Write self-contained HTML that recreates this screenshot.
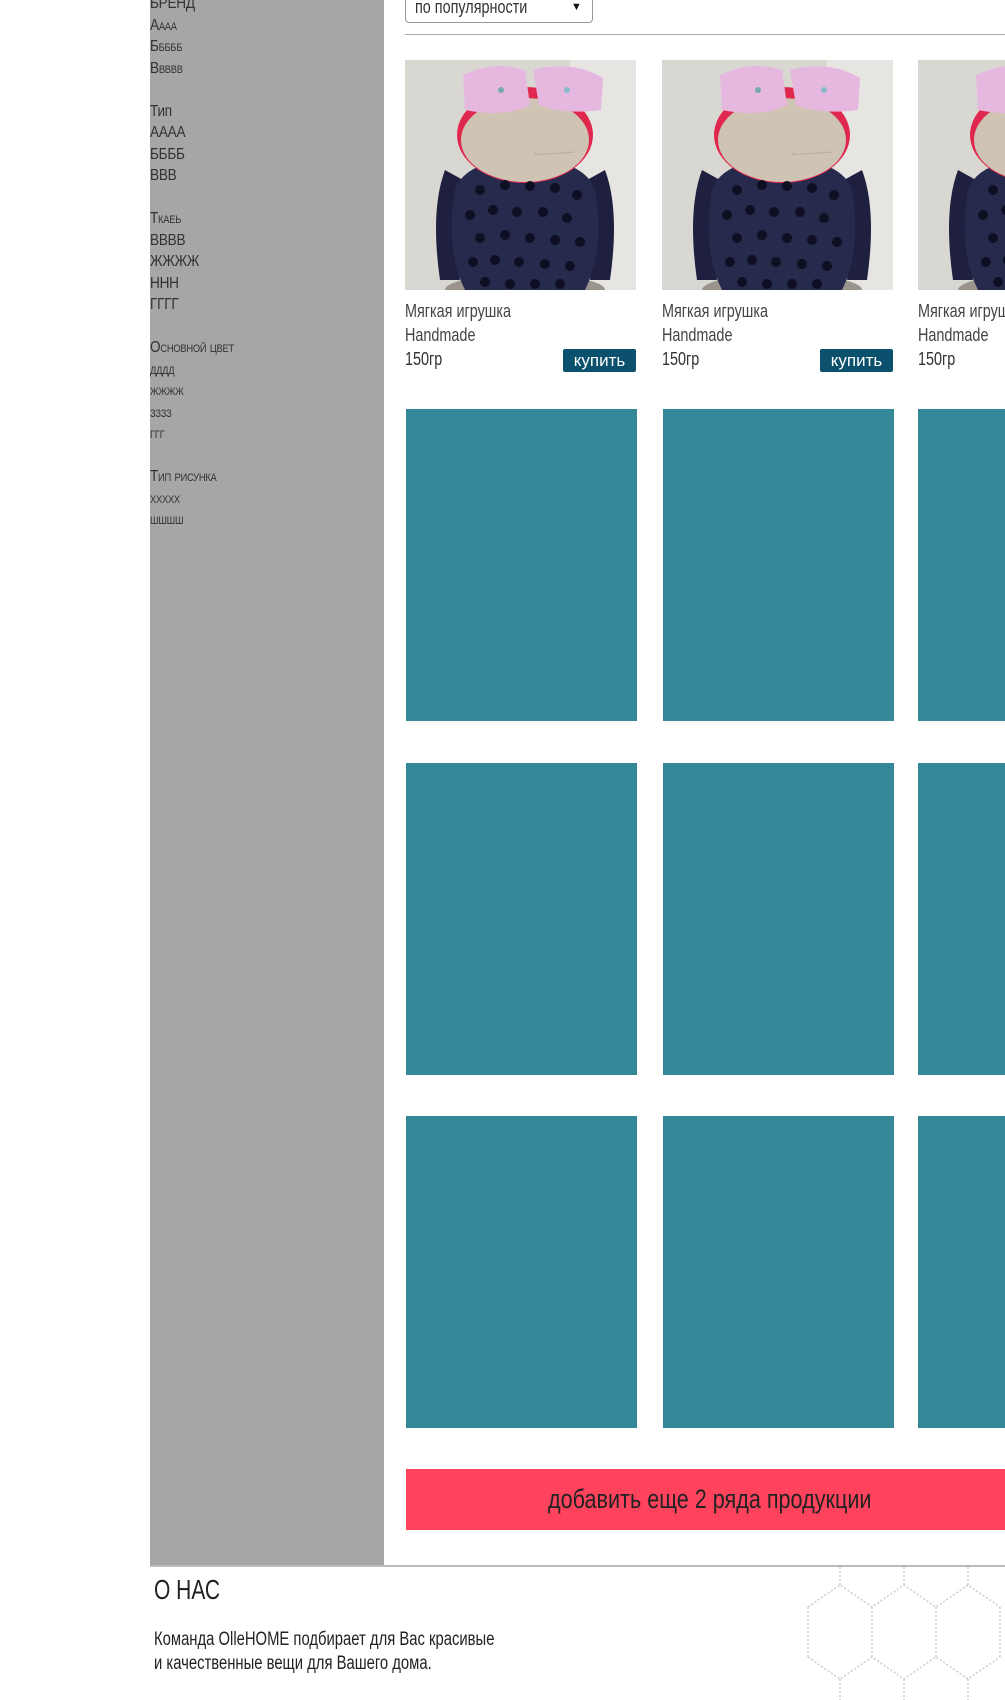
<!DOCTYPE html>
<html><head><meta charset="utf-8"><style>
*{margin:0;padding:0;box-sizing:border-box}
html,body{width:1005px;height:1700px;overflow:hidden}
body{background:#fff;position:relative;font-family:"Liberation Sans Narrow","Liberation Sans",sans-serif;color:#333}
#w{position:absolute;left:0;top:0;width:1005px;height:1700px;overflow:hidden}
.side{position:absolute;left:150px;top:0;width:234px;height:1566px;background:#a5a6a5}
.st{position:absolute;left:150px;font-size:16px;line-height:21.5px;color:#333;transform:scaleX(.85);transform-origin:left top;letter-spacing:-0.3px}
.sc{font-variant:small-caps}
.a{position:absolute}
.teal{position:absolute;background:#358898;width:231px;height:312px}
.card{position:absolute;top:60px;width:231px;height:320px}
.img{width:231px;height:230px;overflow:hidden}
.t{position:absolute;font-size:18px;color:#444;transform:scaleX(.8);transform-origin:left top;white-space:nowrap}
.buy{position:absolute;left:158px;top:289px;width:73px;height:23px;background:#0b506c;color:#fff;font-size:17px;text-align:center;line-height:23px;border-radius:2px}
</style></head><body><div id="w">
<svg width="0" height="0" style="position:absolute"><defs>
<g id="toy">
<rect width="231" height="230" fill="#d9d7d1"/>
<rect x="165" width="66" height="230" fill="#e6e5e1"/>
<ellipse cx="120" cy="230" rx="80" ry="16" fill="#9b948c"/>
<path d="M40 110 Q25 150 35 220 L55 220 Q48 160 58 120 Z" fill="#1f2040"/>
<path d="M200 110 Q215 150 205 220 L185 220 Q192 160 182 120 Z" fill="#1f2040"/>
<path d="M50 130 Q60 100 120 98 Q180 100 190 130 Q200 190 180 230 L60 230 Q40 190 50 130 Z" fill="#262a4d"/>
<ellipse cx="120" cy="75" rx="68" ry="48" fill="#e0284f"/>
<ellipse cx="120" cy="80" rx="64" ry="42" fill="#cfc3b4"/>
<path d="M132 93 Q120 96 170 92" stroke="#b8ac9c" fill="none"/>
<path d="M58 15 Q90 0 120 10 L125 45 Q100 58 60 50 Z" fill="#e6b8e0"/>
<path d="M128 10 Q168 0 198 18 L196 50 Q160 55 134 45 Z" fill="#e6b8e0"/>
<circle cx="96" cy="30" r="3" fill="#7aa"/><circle cx="162" cy="30" r="3" fill="#8bc"/>
<g fill="#0e0f22">
<circle cx="75" cy="130" r="5"/><circle cx="100" cy="125" r="5"/><circle cx="125" cy="126" r="5"/><circle cx="150" cy="128" r="5"/><circle cx="172" cy="135" r="5"/>
<circle cx="65" cy="155" r="5"/><circle cx="88" cy="150" r="5"/><circle cx="112" cy="152" r="5"/><circle cx="138" cy="152" r="5"/><circle cx="162" cy="158" r="5"/>
<circle cx="75" cy="178" r="5"/><circle cx="100" cy="175" r="5"/><circle cx="125" cy="178" r="5"/><circle cx="150" cy="180" r="5"/><circle cx="175" cy="182" r="5"/>
<circle cx="68" cy="202" r="5"/><circle cx="90" cy="200" r="5"/><circle cx="114" cy="202" r="5"/><circle cx="140" cy="204" r="5"/><circle cx="165" cy="206" r="5"/>
<circle cx="80" cy="222" r="5"/><circle cx="105" cy="224" r="5"/><circle cx="130" cy="224" r="5"/><circle cx="155" cy="224" r="5"/>
</g></g></defs></svg>

<div class="side"></div>
<div class="st" style="top:-7px">БРЕНД<br><span class="sc">Аааа</span><br><span class="sc">Ббббб</span><br><span class="sc">Ввввв</span><br><br>Тип<br>АААА<br>ББББ<br>ВВВ<br><br><span class="sc">Ткаеь</span><br>ВВВВ<br>ЖЖЖЖ<br>ННН<br>ГГГГ<br><br><span class="sc">Основной цвет</span><br><span class="sc">дддд</span><br><span class="sc">жжжж</span><br><span class="sc">зззз</span><br><span class="sc">ггг</span><br><br><span class="sc">Тип рисунка</span><br><span class="sc">ххххх</span><br><span class="sc">шшшш</span></div>

<div class="a" style="left:405px;top:-8px;width:188px;height:31px;border:1px solid #999;border-radius:4px"></div>
<div class="t" style="left:415px;top:-3px;font-size:18px;color:#333">по популярности</div>
<div class="a" style="left:571px;top:1px;font-size:11px;color:#111">▼</div>
<div class="a" style="left:405px;top:34px;width:600px;height:1px;background:#aaa"></div>

<div class="card" style="left:405px"><div class="img"><svg width="231" height="230"><use href="#toy"/></svg></div>
<div class="t" style="left:0;top:241px">Мягкая игрушка</div><div class="t" style="left:0;top:265px">Handmade</div><div class="t" style="left:0;top:289px;color:#333">150гр</div><div class="buy">купить</div></div>
<div class="card" style="left:662px"><div class="img"><svg width="231" height="230"><use href="#toy"/></svg></div>
<div class="t" style="left:0;top:241px">Мягкая игрушка</div><div class="t" style="left:0;top:265px">Handmade</div><div class="t" style="left:0;top:289px;color:#333">150гр</div><div class="buy">купить</div></div>
<div class="card" style="left:918px;width:87px;overflow:hidden"><div class="img"><svg width="231" height="230"><use href="#toy"/></svg></div>
<div class="t" style="left:0;top:241px">Мягкая игрушка</div><div class="t" style="left:0;top:265px">Handmade</div><div class="t" style="left:0;top:289px;color:#333">150гр</div></div>

<div class="teal" style="left:406px;top:409px"></div><div class="teal" style="left:663px;top:409px"></div><div class="teal" style="left:918px;top:409px;width:87px"></div>
<div class="teal" style="left:406px;top:763px"></div><div class="teal" style="left:663px;top:763px"></div><div class="teal" style="left:918px;top:763px;width:87px"></div>
<div class="teal" style="left:406px;top:1116px"></div><div class="teal" style="left:663px;top:1116px"></div><div class="teal" style="left:918px;top:1116px;width:87px"></div>

<div class="a" style="left:406px;top:1469px;width:599px;height:61px;background:#ff435d"></div>
<div class="t" style="left:548px;top:1484px;font-size:27px;color:#222">добавить еще 2 ряда продукции</div>

<div class="a" style="left:150px;top:1565px;width:855px;height:2px;background:#bbb"></div>
<svg class="a" style="left:800px;top:1567px" width="205" height="133">
<g fill="none" stroke="#ccc" stroke-width="1.5" stroke-dasharray="2 2">
<path d="M8 40 L40 18 L72 40 L104 18 L136 40 L168 18 L200 40"/>
<path d="M8 40 V90 M72 40 V90 M136 40 V90 M200 40 V90"/>
<path d="M8 90 L40 112 L72 90 L104 112 L136 90 L168 112 L200 90"/>
<path d="M40 0 V18 M104 0 V18 M168 0 V18 M40 112 V133 M104 112 V133 M168 112 V133"/>
</g></svg>
<div class="t" style="left:154px;top:1574px;font-size:28px;color:#222;transform:scaleX(.75)">О НАС</div>
<div class="t" style="left:154px;top:1628px;font-size:19px;color:#222;line-height:24px;transform:scaleX(.78)">Команда OlleHOME подбирает для Вас красивые<br>и качественные вещи для Вашего дома.</div>
</div></body></html>
